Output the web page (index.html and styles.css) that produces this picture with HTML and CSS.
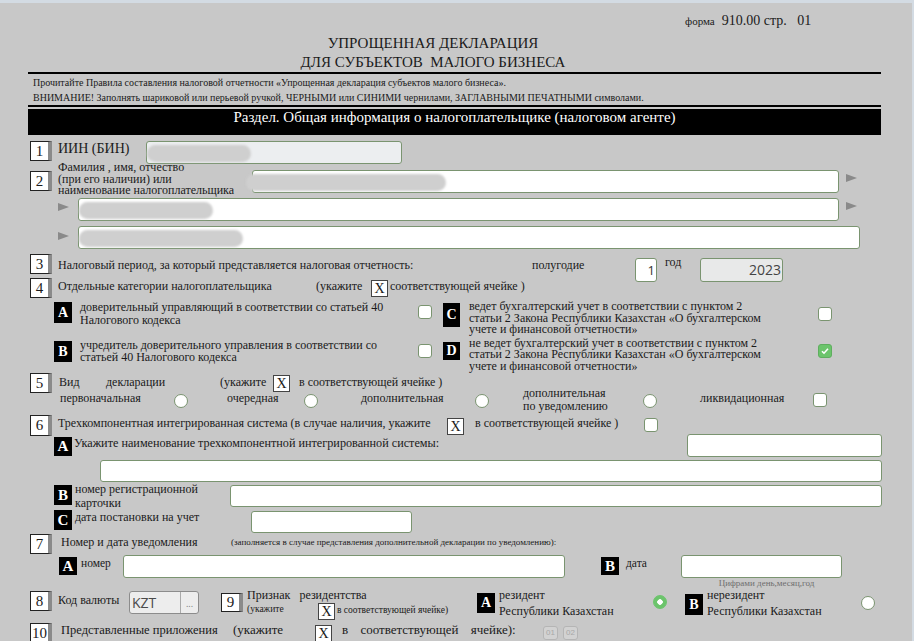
FILE: index.html
```html
<!DOCTYPE html>
<html lang="ru">
<head>
<meta charset="utf-8">
<title>Упрощенная декларация 910.00</title>
<link rel="stylesheet" href="styles.css">
</head>
<body>
<div class="page">
  <div class="topstrip"></div>
  <div class="formno"><span class="fsm">форма</span>&nbsp; 910.00 стр.&nbsp;&nbsp; 01</div>
  <div class="title">УПРОЩЕННАЯ ДЕКЛАРАЦИЯ<br>ДЛЯ СУБЪЕКТОВ&nbsp; МАЛОГО БИЗНЕСА</div>
  <div class="rule"></div>
  <div class="notice">
    <p>Прочитайте Правила составления налоговой отчетности «Упрощенная декларация субъектов малого бизнеса».</p>
    <p>ВНИМАНИЕ! Заполнять шариковой или перьевой ручкой, ЧЕРНЫМИ или СИНИМИ чернилами, ЗАГЛАВНЫМИ ПЕЧАТНЫМИ символами.</p>
  </div>
  <div class="rule"></div>
  <div class="section-bar">Раздел. Общая информация о налогоплательщике (налоговом агенте)</div>

  <!-- 1 -->
  <div class="row r1">
    <div class="num">1</div>
    <div class="lbl l1">ИИН (БИН)</div>
    <div class="inp inp-iin"><span class="blob blob-iin"></span></div>
  </div>

  <!-- 2 -->
  <div class="row r2">
    <div class="num n2">2</div>
    <div class="lbl l2"><span class="l2a">Фамилия , имя, отчество</span><span class="l2b">(при его наличии) или</span><span class="l2b">наименование налогоплательщика</span></div>
    <div class="inp inp-fio"><span class="blob blob-fio"></span></div>
    <div class="arrow ar-r2"></div>
  </div>
  <div class="row r2b">
    <div class="arrow ar-l"></div>
    <div class="inp inp-fio2"><span class="blob blob-fio2"></span></div>
    <div class="arrow ar-r"></div>
  </div>
  <div class="row r2c">
    <div class="arrow ar-l ar-l2"></div>
    <div class="inp inp-fio3"><span class="blob blob-fio3"></span></div>
  </div>

  <!-- 3 -->
  <div class="row r3">
    <div class="num n3">3</div>
    <div class="lbl l3">Налоговый период, за который представляется налоговая отчетность:</div>
    <div class="lbl l3b">полугодие</div>
    <div class="inp inp-half">1</div>
    <div class="lbl l3c">год</div>
    <div class="inp inp-year">2023</div>
  </div>

  <!-- 4 -->
  <div class="row r4">
    <div class="num n4">4</div>
    <div class="lbl l4">Отдельные категории налогоплательщика</div>
    <div class="lbl l4b">(укажите</div>
    <div class="xbox x4">X</div>
    <div class="lbl l4c">соответствующей ячейке )</div>
  </div>
  <div class="row sub r4ac">
    <div class="lt ltA">A</div>
    <div class="lbl cat catL">доверительный управляющий в соответствии со статьей 40<br>Налогового кодекса</div>
    <div class="cb cb4a"></div>
    <div class="lt ltC">C</div>
    <div class="lbl cat catR">ведет бухгалтерский учет в соответствии с пунктом 2<br>статьи 2 Закона Республики Казахстан «О бухгалтерском<br>учете и финансовой отчетности»</div>
    <div class="cb cb4c"></div>
  </div>
  <div class="row sub r4bd">
    <div class="lt ltB">B</div>
    <div class="lbl cat catL">учредитель доверительного управления в соответствии со<br>статьей 40 Налогового кодекса</div>
    <div class="cb cb4b"></div>
    <div class="lt ltD">D</div>
    <div class="lbl cat catR catD">не ведет бухгалтерский учет в соответствии с пунктом 2<br>статьи 2 Закона Республики Казахстан «О бухгалтерском<br>учете и финансовой отчетности»</div>
    <div class="cb cb4d checked"><svg viewBox="0 0 14 14" width="14" height="14"><path d="M4 7.2l2 2 4-4.4" fill="none" stroke="#fff" stroke-width="1.6"/></svg></div>
  </div>

  <!-- 5 -->
  <div class="row r5">
    <div class="num n5">5</div>
    <div class="lbl l5a">Вид</div>
    <div class="lbl l5b">декларации</div>
    <div class="lbl l5c">(укажите</div>
    <div class="xbox x5">X</div>
    <div class="lbl l5d">в соответствующей ячейке )</div>
  </div>
  <div class="row r5b">
    <div class="lbl k1">первоначальная</div>
    <div class="rd rd5"></div>
    <div class="lbl k2">очередная</div>
    <div class="rd rd5"></div>
    <div class="lbl k3">дополнительная</div>
    <div class="rd rd5"></div>
    <div class="lbl k4">дополнительная<br>по уведомлению</div>
    <div class="rd rd5"></div>
    <div class="lbl k5">ликвидационная</div>
    <div class="cb cb5"></div>
  </div>

  <!-- 6 -->
  <div class="row r6">
    <div class="num n6">6</div>
    <div class="lbl l6">Трехкомпонентная интегрированная система (в случае наличия, укажите</div>
    <div class="xbox x6">X</div>
    <div class="lbl l6b">в соответствующей ячейке )</div>
    <div class="cb cb6"></div>
  </div>
  <div class="row sub r6a">
    <div class="lt lt6">A</div>
    <div class="lbl l6a">Укажите наименование трехкомпонентной интегрированной системы:</div>
    <div class="inp inp-6a"></div>
  </div>
  <div class="row r6c">
    <div class="inp inp-6c"></div>
  </div>
  <div class="row sub r6d">
    <div class="lt lt6">B</div>
    <div class="lbl l6d">номер регистрационной<br>карточки</div>
    <div class="inp inp-6d"></div>
  </div>
  <div class="row sub r6e">
    <div class="lt lt6">C</div>
    <div class="lbl l6e">дата постановки на учет</div>
    <div class="inp inp-6e"></div>
  </div>

  <!-- 7 -->
  <div class="row r7">
    <div class="num">7</div>
    <div class="lbl l7">Номер и дата уведомления</div>
    <div class="lbl l7s">(заполняется в случае представления дополнительной декларации по уведомлению):</div>
  </div>
  <div class="row r7b">
    <div class="lt lt7">A</div>
    <div class="lbl l7n">номер</div>
    <div class="inp inp-7n"></div>
    <div class="lt lt7 lt7b">B</div>
    <div class="lbl l7d">дата</div>
    <div class="datecol">
      <div class="inp inp-7d"></div>
      <div class="hint">Цифрами день,месяц,год</div>
    </div>
  </div>

  <!-- 8 / 9 -->
  <div class="row r8">
    <div class="num n8">8</div>
    <div class="lbl l8">Код валюты</div>
    <div class="cur"><span class="cur-val">KZT</span><span class="cur-btn">...</span></div>
    <div class="num n9">9</div>
    <div class="res">
      <div class="res1">Признак&nbsp;&nbsp; резидентства</div>
      <div class="res2"><span class="res-u">(укажите</span><span class="xbox x9">X</span><span class="res-t">в соответствующей ячейке)</span></div>
    </div>
    <div class="lt lt9a">A</div>
    <div class="lbl l9">резидент<br>Республики Казахстан</div>
    <div class="rd rd9 on"></div>
    <div class="lt lt9b">B</div>
    <div class="lbl l9">нерезидент<br>Республики Казахстан</div>
    <div class="rd rd9"></div>
  </div>

  <!-- 10 -->
  <div class="row r10">
    <div class="num n10">10</div>
    <div class="lbl l10">Представленные приложения</div>
    <div class="lbl l10b">(укажите</div>
    <div class="xbox x10">X</div>
    <div class="lbl l10c">в соответствующей ячейке):</div>
    <div class="pill">01</div>
    <div class="pill">02</div>
  </div>
</div>
</body>
</html>
```

FILE: styles.css
```css
* { box-sizing: border-box; }
html, body { margin: 0; padding: 0; background: #c8c8c8; }
body { font-family: "Liberation Serif", "Times New Roman", serif; color: #1a1a1a; }
p { margin: 0; }

.page {
  width: 914px;
  height: 641px;
  overflow: hidden;
  background: #c8c8c8;
  border-right: 2px solid #d3dbe3;
}
.topstrip { height: 3px; background: #d3dbe3; }

.formno {
  height: 26px;
  padding: 10px 0 0 685px;
  line-height: 16px;
  font-size: 14px;
}
.fsm { font-size: 11px; }

.title {
  width: 866px;
  height: 43px;
  padding-top: 5px;
  text-align: center;
  font-size: 15px;
  line-height: 19px;
}
.rule { margin-left: 28px; width: 853px; height: 2px; background: #000; }
.notice {
  height: 31px;
  padding: 1px 0 0 33px;
  font-size: 10px;
  line-height: 15px;
}
.section-bar {
  margin: 2px 0 0 28px;
  width: 853px;
  height: 26px;
  background: #000;
  color: #fff;
  text-align: center;
  font-size: 15px;
  line-height: 17px;
}

/* generic */
.row { display: flex; align-items: flex-start; padding-left: 30px; position: relative; }
.row.sub { padding-left: 54px; }
.lbl { font-size: 12px; line-height: 16px; white-space: nowrap; }

.num {
  flex: none;
  width: 22px;
  height: 20px;
  background: #fff;
  border: 1px solid #222;
  border-right: 4px solid #8a8a8a;
  font-size: 15px;
  line-height: 18px;
  text-align: center;
}
.lt {
  flex: none;
  width: 18px;
  height: 20px;
  background: #000;
  color: #fff;
  font-weight: bold;
  font-size: 14px;
  line-height: 20px;
  text-align: center;
}
.inp {
  flex: none;
  position: relative;
  height: 23px;
  background: #fff;
  border: 1px solid #7a9470;
  border-radius: 3px;
}
.xbox {
  flex: none;
  width: 17px;
  height: 17px;
  background: #fff;
  border: 1px solid #444;
  font-size: 14px;
  line-height: 15px;
  text-align: center;
}
.cb {
  flex: none;
  width: 14px;
  height: 14px;
  background: #fff;
  border: 1px solid #7a9470;
  border-radius: 3px;
}
.cb.checked { background: #6cc46c; border-color: #5fae5f; }
.cb.checked svg { display: block; margin: -1px 0 0 -1px; }
.rd {
  flex: none;
  width: 14px;
  height: 14px;
  background: #fff;
  border: 1px solid #7a9470;
  border-radius: 50%;
}
.rd.on {
  background: radial-gradient(circle, #fff 0 2.5px, #6cc46c 3px);
  border-color: #6cc46c;
}
.arrow {
  flex: none;
  width: 0; height: 0;
  border-top: 4.5px solid transparent;
  border-bottom: 4.5px solid transparent;
  border-left: 11px solid #8a8a8a;
}
.blob {
  position: absolute;
  top: 3px;
  height: 17px;
  background: #cfcfcf;
  border-radius: 9px;
  filter: blur(1px);
}

/* row 1 */
.r1 { height: 31px; padding-top: 6px; }
.l1 { width: 88px; margin-left: 6px; font-size: 14px; line-height: 16px; }
.inp-iin { width: 256px; background: #eceef0; }
.blob-iin { left: 0; width: 104px; }

/* row 2 */
.r2 { height: 30px; }
.n2 { margin-top: 5px; }
.l2 { width: 194px; margin-left: 6px; margin-top: -5px; display: flex; flex-direction: column; }
.l2a { line-height: 13px; }
.l2b { line-height: 11px; }
.inp-fio { width: 587px; margin-top: 4px; }
.blob-fio { left: -7px; width: 200px; }
.ar-r2 { margin: 8px 0 0 7px; }
.r2b { height: 28px; padding-left: 58px; }
.ar-l { margin-top: 7px; }
.ar-l2 { margin-top: 8px; }
.inp-fio2 { width: 761px; margin: 2px 0 0 9px; }
.blob-fio2 { left: 0; width: 134px; }
.ar-r { margin: 6px 0 0 7px; }
.r2c { height: 28px; padding-left: 58px; }
.inp-fio3 { width: 782px; margin: 2px 0 0 9px; }
.blob-fio3 { left: 0; width: 164px; }

/* row 3 */
.r3 { height: 24px; }
.n3 { margin-top: 2px; }
.l3 { width: 474px; margin: 5px 0 0 6px; }
.l3b { width: 103px; margin-top: 5px; }
.inp-half { width: 22px; height: 24px; margin-top: 6px; font-family: "Open Sans", "Liberation Sans", sans-serif; font-size: 13px; line-height: 22px; text-align: right; padding-right: 1px; color: #333; }
.l3c { width: 35px; margin: 2px 0 0 8px; }
.inp-year { width: 83px; height: 24px; margin-top: 6px; background: #e8e9e9; font-family: "Open Sans", "Liberation Sans", sans-serif; font-size: 14px; line-height: 22px; text-align: right; padding-right: 1px; color: #444; }

/* row 4 */
.r4 { height: 24px; }
.n4 { margin-top: 2px; }
.l4 { width: 258px; margin: 2px 0 0 6px; }
.l4b { width: 55px; margin-top: 2px; }
.x4 { margin-top: 4px; }
.l4c { margin: 2px 0 0 2px; }
.r4ac { height: 39px; }
.r4bd { height: 32px; }
.cat { line-height: 12px; }
.ltA { margin-top: 2px; height: 21px; line-height: 21px; }
.catL { width: 338px; margin: 1px 0 0 8px; line-height: 12.5px; }
.cb4a { margin-top: 5px; }
.ltC { margin: 3px 0 0 11px; width: 17px; height: 24px; line-height: 24px; }
.catR { width: 349px; margin: 1px 0 0 9px; line-height: 11.5px; }
.cb4c { margin-top: 7px; }
.ltB { margin-top: 2px; height: 21px; line-height: 21px; }
.r4bd .catL { margin-top: 1px; line-height: 11.5px; }
.cb4b { margin-top: 5px; }
.ltD { margin: 3px 0 0 11px; width: 17px; height: 18px; line-height: 18px; }
.catD { margin-top: -1px; line-height: 11.3px; }
.cb4d { margin-top: 5px; }

/* row 5 */
.r5 { height: 19px; }
.n5 { margin-top: 2px; }
.l5a { width: 47px; margin: 3px 0 0 7px; }
.l5b { width: 114px; margin-top: 3px; }
.l5c { width: 53px; margin-top: 3px; }
.x5 { margin-top: 4px; }
.l5d { margin: 3px 0 0 9px; }
.r5b { height: 22px; padding-left: 60px; }
.rd5 { margin-top: 4px; }
.k1 { width: 114px; }
.k2 { width: 77px; margin-left: 39px; }
.k3 { width: 114px; margin-left: 43px; }
.k4 { width: 120px; margin-left: 34px; margin-top: -3px; line-height: 13px; }
.k5 { width: 113px; margin-left: 43px; }
.cb5 { margin-top: 3px; }

/* row 6 */
.r6 { height: 23px; }
.n6 { margin-top: 3px; height: 21px; }
.l6 { width: 389px; margin: 3px 0 0 6px; }
.x6 { margin-top: 6px; }
.l6b { width: 169px; margin: 3px 0 0 11px; }
.cb6 { margin-top: 6px; }
.r6a { height: 24px; }
.lt6 { margin-top: 2px; height: 19px; line-height: 19px; font-size: 15px; }
.l6a { width: 613px; margin-left: 2px; font-size: 12.2px; }
.inp-6a { width: 195px; margin-top: -1px; }
.r6c { height: 25px; padding-left: 100px; }
.inp-6c { width: 782px; height: 22px; margin-top: 1px; }
.r6d { height: 25px; }
.r6d .lt6 { margin-top: 1px; height: 20px; line-height: 20px; }
.l6d { width: 155px; margin: -2px 0 0 3px; line-height: 14px; }
.inp-6d { width: 652px; height: 22px; margin-top: 1px; }
.r6e { height: 25px; }
.r6e .lt6 { margin-top: 1px; height: 20px; line-height: 20px; }
.l6e { width: 176px; margin-left: 3px; }
.inp-6e { width: 161px; height: 22px; margin-top: 2px; }

/* row 7 */
.r7 { height: 21px; }
.l7 { width: 170px; margin-left: 9px; font-size: 12px; }
.l7s { font-size: 9px; line-height: 16px; }
.r7b { height: 33px; padding-left: 59px; }
.lt7 { margin-top: 2px; height: 18px; line-height: 18px; font-size: 15px; }
.l7n { width: 42px; margin: 1px 0 0 4px; font-size: 11.5px; line-height: 14px; }
.inp-7n { width: 442px; }
.lt7b { margin-left: 36px; }
.l7d { width: 55px; margin: 1px 0 0 7px; font-size: 11.5px; line-height: 14px; }
.datecol { display: flex; flex-direction: column; align-items: center; width: 161px; }
.inp-7d { width: 161px; }
.hint { font-size: 9px; line-height: 10px; color: #6e6e6e; padding-left: 10px; }

/* row 8 / 9 */
.r8 { height: 32px; }
.n8 { margin-top: 3px; }
.l8 { width: 71px; margin: 4px 0 0 6px; font-size: 12px; }
.cur {
  flex: none;
  display: flex;
  width: 70px;
  height: 23px;
  margin-top: 3px;
  background: #ededed;
  border: 1px solid #8c8c8c;
  border-radius: 3px;
  font-family: "Open Sans", "Liberation Sans", sans-serif;
}
.cur-val { width: 50px; font-size: 14px; line-height: 22px; padding-left: 2px; color: #4a4a4a; }
.cur-btn { width: 18px; border-left: 1px solid #aaa; font-size: 9px; line-height: 24px; text-align: center; color: #777; }
.n9 { margin: 5px 0 0 22px; height: 19px; line-height: 17px; }
.res { width: 230px; margin-left: 4px; }
.res1 { font-size: 12px; line-height: 14px; }
.res2 { display: flex; align-items: flex-start; height: 17px; font-size: 9.5px; line-height: 12px; }
.res-u { width: 71px; margin-top: 1px; }
.x9 { margin-top: 1px; }
.res-t { margin: 2px 0 0 2px; }
.lt9a { margin-top: 5px; }
.lt9b { margin: 6px 0 0 18px; height: 21px; line-height: 21px; }
.l9 { width: 154px; margin: -1px 0 0 4px; font-size: 12px; line-height: 16px; }
.rd9 { margin-top: 7px; }
.r8 .rd9:last-child { margin-top: 8px; }

/* row 10 */
.r10 { height: 21px; }
.n10 { margin-top: 3px; }
.l10 { width: 172px; margin: 2px 0 0 9px; font-size: 12.5px; }
.l10b { width: 82px; margin-top: 2px; font-size: 13px; }
.x10 { margin-top: 5px; height: 18px; }
.l10c { width: 201px; margin: 2px 0 0 10px; font-size: 13px; word-spacing: 9px; }
.pill {
  flex: none;
  width: 15px;
  height: 14px;
  margin: 6px 5px 0 0;
  background: #d2d2d2;
  border: 1px solid #b5b5b5;
  border-radius: 3px;
  font-family: "Liberation Sans", sans-serif;
  font-size: 8px;
  line-height: 12px;
  text-align: center;
  color: #a8a8a8;
}
```
